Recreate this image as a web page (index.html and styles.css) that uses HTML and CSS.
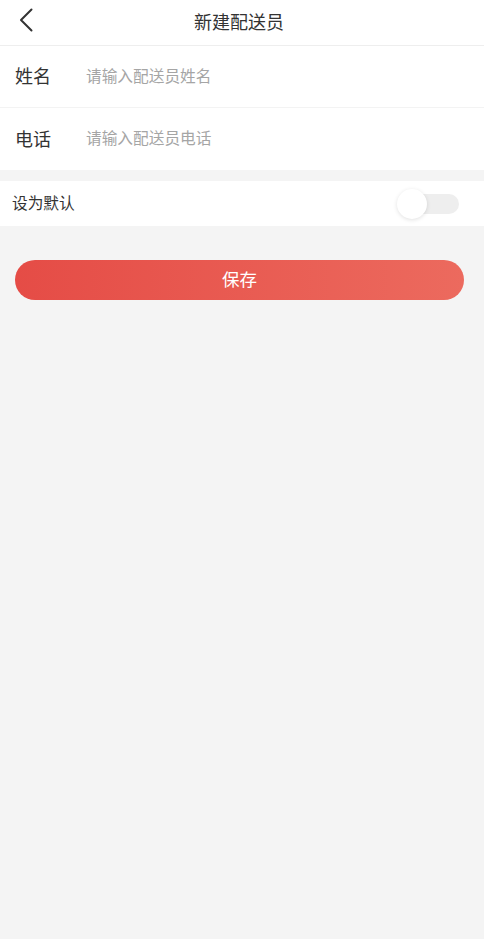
FILE: index.html
```html
<!DOCTYPE html>
<html lang="zh-CN">
<head>
    <meta charset="UTF-8">
    <meta name="viewport" content="width=device-width, initial-scale=1.0">
    <title>新建配送员</title>
    <link rel="stylesheet" href="styles.css">
</head>
<body>
    <div class="header">
        <a class="back" href="#">
            <svg width="14" height="24" viewBox="0 0 14 24">
                <path d="M12.5 1.5 L2 12 L12.5 22.5" fill="none" stroke="#333" stroke-width="2" stroke-linecap="round" stroke-linejoin="round"/>
            </svg>
        </a>
        <div class="title">新建配送员</div>
    </div>

    <div class="form">
        <div class="form-row">
            <span class="label">姓名</span>
            <input class="input" type="text" placeholder="请输入配送员姓名">
        </div>
        <div class="form-row">
            <span class="label">电话</span>
            <input class="input" type="tel" placeholder="请输入配送员电话">
        </div>
    </div>

    <div class="default-row">
        <span class="default-text">设为默认</span>
        <div class="switch">
            <div class="switch-track"></div>
            <div class="switch-knob"></div>
        </div>
    </div>

    <button class="save-btn">保存</button>
</body>
</html>
```

FILE: styles.css
```css
body {
    font-family: "Noto Sans CJK SC", "Noto Sans", sans-serif;
    background: #f4f4f4;
    margin: 0;
    min-height: 100vh;
    color: #333;
}

.header {
    height: 45px;
    box-sizing: border-box;
    padding-bottom: 4px;
    background: white;
    border-bottom: 1px solid #eeeeee;
    display: flex;
    align-items: center;
    justify-content: center;
    position: relative;
    height: 46px;
}

.back {
    position: absolute;
    left: 19px;
    top: 8px;
    width: 14px;
    height: 24px;
    display: block;
}

.title {
    font-size: 18px;
    color: #333;
    margin-left: -6px;
}

.form {
    background: white;
}

.form-row {
    height: 61px;
    box-sizing: border-box;
    padding: 0 0 3px 15px;
    display: flex;
    align-items: center;
    border-bottom: 1px solid #f3f3f3;
    height: 62px;
}

.form-row:last-child {
    border-bottom: none;
}

.label {
    font-size: 18px;
    color: #333;
    width: 71px;
}

.input {
    flex: 1;
    border: none;
    outline: none;
    background: transparent;
    font-family: inherit;
    font-size: 15.7px;
    color: #333;
    padding: 0;
}

.input::placeholder {
    color: #a5a5a5;
}

.default-row {
    margin-top: 11px;
    height: 45px;
    box-sizing: border-box;
    background: white;
    display: flex;
    align-items: center;
    justify-content: space-between;
    padding: 0 25px 0 12px;
}

.default-text {
    font-size: 15.7px;
    color: #333;
    margin-bottom: 3px;
}

.switch {
    position: relative;
    width: 62px;
    height: 30px;
}

.switch-track {
    position: absolute;
    left: 6px;
    right: 0;
    top: 5px;
    height: 20px;
    border-radius: 10px;
    background: #eeeeee;
}

.switch-knob {
    position: absolute;
    left: 0;
    top: 0;
    width: 30px;
    height: 30px;
    border-radius: 50%;
    background: white;
    box-shadow: 0 1px 4px rgba(0,0,0,0.12);
}

.save-btn {
    display: block;
    margin: 34px 20px 0 15px;
    width: calc(100% - 35px);
    height: 40px;
    padding: 0 0 3px;
    border: none;
    border-radius: 20px;
    background: linear-gradient(90deg, #e54c46 0%, #ec6a5e 100%);
    color: white;
    font-family: inherit;
    font-size: 17.5px;
    cursor: pointer;
}
```
